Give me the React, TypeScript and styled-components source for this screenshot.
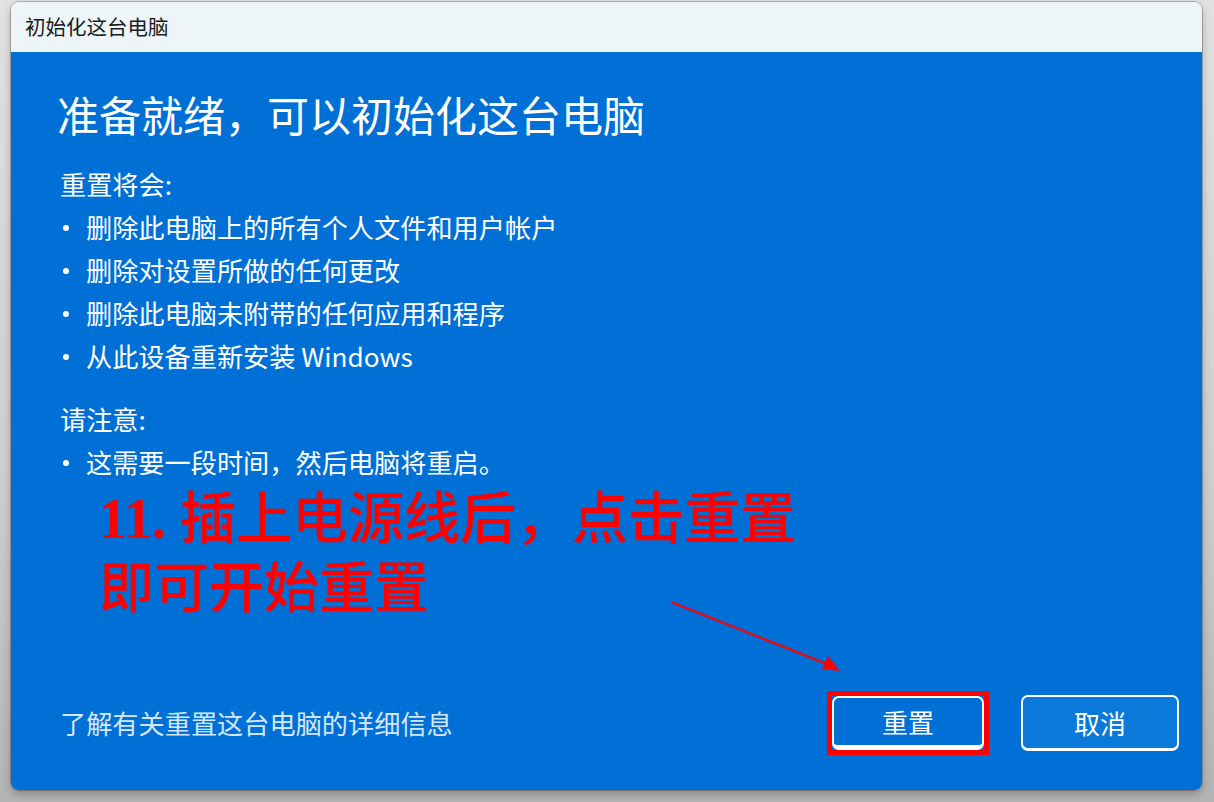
import styled, { createGlobalStyle } from 'styled-components';

const GlobalStyle = createGlobalStyle`
  html, body {
    margin: 0;
    padding: 0;
  }

  body {
    width: 1214px;
    height: 802px;
    overflow: hidden;
    background: linear-gradient(180deg, #e2e2e2 0%, #cfcfcf 60%, #b4b4b4 100%);
    font-family: "Segoe UI", "Noto Sans CJK SC", "Noto Sans", sans-serif;
  }
`;

const CJK = '"Noto Sans CJK SC", "Noto Sans", sans-serif';

const Page = styled.div`
  width: 1214px;
  height: 802px;
  padding: 2px 12px 12px 11px;
  box-sizing: border-box;
`;

const Window = styled.div`
  position: relative;
  width: 1191px;
  height: 788px;
  display: flex;
  flex-direction: column;
  border-radius: 8px;
  overflow: hidden;
  box-shadow: 0 0 0 1px rgba(0, 0, 0, 0.22), 0 4px 10px rgba(0, 0, 0, 0.25);
`;

const TitleBar = styled.div`
  height: 50px;
  flex: none;
  display: flex;
  align-items: center;
  padding: 0 0 3px 14px;
  box-sizing: border-box;
  background: #edf5f9;
  color: #1b1b1b;
  font-family: ${CJK};
  font-size: 20.5px;
`;

const Body = styled.div`
  flex: 1;
  display: flex;
  flex-direction: column;
  padding: 34px 23px 35px 49px;
  background: #0070d6;
  color: #ffffff;
  font-family: ${CJK};
`;

const Heading = styled.h1`
  margin: 0 0 0 -3px;
  font-size: 42px;
  font-weight: 400;
  line-height: 56px;
`;

const Section = styled.div<{ $gap: number }>`
  margin-top: ${(p) => p.$gap}px;
  font-size: 26.2px;
  line-height: 43px;
`;

const Label = styled.div``;

const List = styled.ul`
  margin: 0;
  padding: 0;
  list-style: none;
`;

const Item = styled.li`
  position: relative;
  padding-left: 26px;

  &::before {
    content: '';
    position: absolute;
    left: 3px;
    top: 19px;
    width: 6px;
    height: 6px;
    border-radius: 50%;
    background: #ffffff;
  }
`;

const Note = styled.div`
  margin: 0 0 0 39px;
  color: #ff0000;
  font-family: "Liberation Serif", ${CJK};
  font-weight: 500;
  line-height: 70px;
  white-space: nowrap;
`;

const NoteLine = styled.div<{ $size: number }>`
  font-size: ${(p) => p.$size}px;
`;

const Num = styled.span`
  font-weight: 700;
`;

const Footer = styled.div`
  margin-top: auto;
  display: flex;
  align-items: center;
  justify-content: space-between;
`;

const LearnLink = styled.a`
  color: #d3e7fb;
  font-size: 26.2px;
  line-height: 40px;
  text-decoration: none;
`;

const Buttons = styled.div`
  display: flex;
  align-items: center;
  gap: 32px;
`;

const Highlight = styled.div`
  border: 5px solid #ff0000;
  display: flex;
`;

const DialogButton = styled.button<{ $primary?: boolean }>`
  width: ${(p) => (p.$primary ? 152 : 158)}px;
  height: ${(p) => (p.$primary ? 54 : 56)}px;
  box-sizing: border-box;
  border: 2.5px solid #ffffff;
  border-bottom-width: ${(p) => (p.$primary ? 5 : 3)}px;
  border-radius: 7px;
  background: ${(p) => (p.$primary ? '#0070d6' : '#0a79d9')};
  color: #ffffff;
  font-family: ${CJK};
  font-size: 26px;
  line-height: 1;
  padding: 0;
  cursor: pointer;
`;

const Arrow = styled.svg`
  position: absolute;
  left: 0;
  top: 0;
  width: 1191px;
  height: 788px;
  pointer-events: none;
`;

const bulletsA = [
  '删除此电脑上的所有个人文件和用户帐户',
  '删除对设置所做的任何更改',
  '删除此电脑未附带的任何应用和程序',
  '从此设备重新安装 Windows',
];

const bulletsB = ['这需要一段时间，然后电脑将重启。'];

export default function App() {
  return (
    <>
      <GlobalStyle />
      <Page>
        <Window>
          <TitleBar>初始化这台电脑</TitleBar>
          <Body>
            <Heading>准备就绪，可以初始化这台电脑</Heading>
            <Section $gap={21}>
              <Label>重置将会:</Label>
              <List>
                {bulletsA.map((t) => (
                  <Item key={t}>{t}</Item>
                ))}
              </List>
            </Section>
            <Section $gap={20}>
              <Label>请注意:</Label>
              <List>
                {bulletsB.map((t) => (
                  <Item key={t}>{t}</Item>
                ))}
              </List>
            </Section>
            <Note>
              <NoteLine $size={56}>
                <Num>11. </Num>插上电源线后，点击重置
              </NoteLine>
              <NoteLine $size={55}>即可开始重置</NoteLine>
            </Note>
            <Footer>
              <LearnLink href="#">了解有关重置这台电脑的详细信息</LearnLink>
              <Buttons>
                <Highlight>
                  <DialogButton $primary>重置</DialogButton>
                </Highlight>
                <DialogButton>取消</DialogButton>
              </Buttons>
            </Footer>
          </Body>
          {/* annotation arrow pointing at the reset button */}
          <Arrow viewBox="0 0 1191 788">
            <line x1="660" y1="600" x2="818" y2="663" stroke="#ff0000" strokeWidth="2.2" />
            <polygon points="829,669 811,667 817,654" fill="#ff0000" />
          </Arrow>
        </Window>
      </Page>
    </>
  );
}
